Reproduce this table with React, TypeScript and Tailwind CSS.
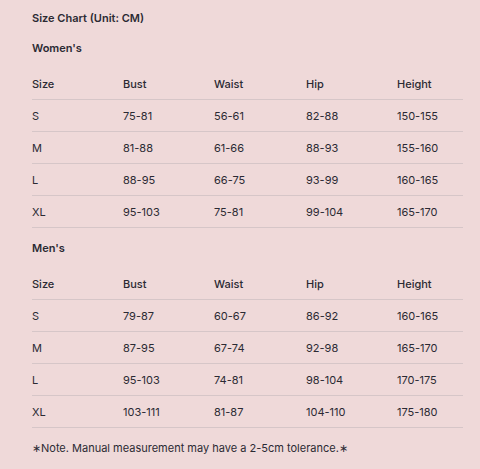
import React from "react";

const women = [
  ["S", "75-81", "56-61", "82-88", "150-155"],
  ["M", "81-88", "61-66", "88-93", "155-160"],
  ["L", "88-95", "66-75", "93-99", "160-165"],
  ["XL", "95-103", "75-81", "99-104", "165-170"],
];
const men = [
  ["S", "79-87", "60-67", "86-92", "160-165"],
  ["M", "87-95", "67-74", "92-98", "165-170"],
  ["L", "95-103", "74-81", "98-104", "170-175"],
  ["XL", "103-111", "81-87", "104-110", "175-180"],
];
const head = ["Size", "Bust", "Waist", "Hip", "Height"];

function Row({ cells, header }: { cells: string[]; header?: boolean }) {
  return (
    <div
      className={`grid h-[32px] grid-cols-[91px_91px_92px_91px_1fr] items-center border-b border-[#d6c6c8] ${
        header ? "font-medium" : "font-normal"
      }`}
    >
      {cells.map((c, i) => (
        <div key={i}>{c}</div>
      ))}
    </div>
  );
}

function Table({ rows }: { rows: string[][] }) {
  return (
    <div className="w-[431px]">
      <Row cells={head} header />
      {rows.map((r, i) => (
        <Row key={i} cells={r} />
      ))}
    </div>
  );
}

export default function App() {
  return (
    <div
      className="h-[469px] w-[480px] bg-[#efd9d9] pl-[32px] pt-[8px] text-[11px] leading-[20px] text-[#2b2a33]"
      style={{ fontFamily: "Inter, 'Liberation Sans', sans-serif" }}
    >
      <div className="font-semibold">Size Chart (Unit: CM)</div>
      <div className="mt-[10px] font-semibold">Women's</div>
      <div className="mt-[10px]">
        <Table rows={women} />
      </div>
      <div className="mt-[10px] font-semibold">Men's</div>
      <div className="mt-[10px]">
        <Table rows={men} />
      </div>
      <div className="mt-[10px]">∗Note. Manual measurement may have a 2-5cm tolerance.∗</div>
    </div>
  );
}
